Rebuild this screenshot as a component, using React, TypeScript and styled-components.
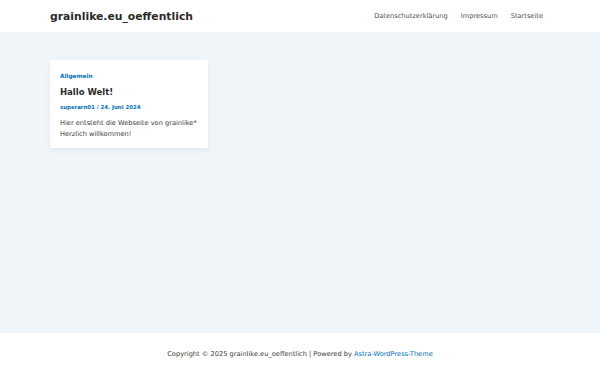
import React from "react";
import styled, { createGlobalStyle } from "styled-components";

const Global = createGlobalStyle`
  html, body { margin: 0; padding: 0; }
  body {
    font-family: "DejaVu Sans", Verdana, sans-serif;
    background: #f0f5fa;
    color: #3a3a3a;
  }
`;

const Page = styled.div`
  width: 600px;
  height: 375px;
  display: flex;
  flex-direction: column;
  background: #f0f5fa;
`;

const Header = styled.header`
  height: 33px;
  background: #ffffff;
  border-bottom: 1px solid #eef2f7;
  box-sizing: border-box;
  display: flex;
  align-items: center;
  justify-content: space-between;
  padding: 0 57px 0 50px;
`;

const SiteTitle = styled.a`
  font-size: 10.8px;
  font-weight: 700;
  color: #2a2a2a;
  text-decoration: none;
`;

const Nav = styled.nav`
  display: flex;
  gap: 13px;
`;

const NavLink = styled.a`
  font-size: 6.65px;
  color: #4b4f58;
  text-decoration: none;
`;

const Main = styled.main`
  flex: 1;
  padding: 27px 50px 0;
`;

const Card = styled.article`
  width: 158px;
  box-sizing: border-box;
  background: #ffffff;
  padding: 12px 10px 8px;
  box-shadow: 0 2px 6px rgba(0, 0, 0, 0.06);
`;

const Category = styled.a`
  display: block;
  font-size: 5.8px;
  font-weight: 700;
  color: #0170b9;
  text-decoration: none;
  line-height: 9px;
`;

const Title = styled.h2`
  margin: 5px 0 0;
  font-size: 8.5px;
  font-weight: 700;
  color: #2a2a2a;
  line-height: 13px;
`;

const Meta = styled.div`
  margin-top: 4px;
  font-size: 5.4px;
  font-weight: 700;
  color: #0170b9;
  line-height: 9px;
`;

const Excerpt = styled.p`
  margin: 6px 0 0;
  font-size: 6.65px;
  line-height: 11px;
  color: #3a3a3a;
`;

const Footer = styled.footer`
  height: 42px;
  background: #ffffff;
  display: flex;
  align-items: center;
  justify-content: center;
  font-size: 6.65px;
  color: #3a3a3a;
`;

const FooterLink = styled.a`
  color: #0170b9;
  text-decoration: none;
`;

export default function App() {
  return (
    <Page>
      <Global />
      <Header>
        <SiteTitle>grainlike.eu_oeffentlich</SiteTitle>
        <Nav>
          <NavLink>Datenschutzerklärung</NavLink>
          <NavLink>Impressum</NavLink>
          <NavLink>Startseite</NavLink>
        </Nav>
      </Header>
      <Main>
        <Card>
          <Category>Allgemein</Category>
          <Title>Hallo Welt!</Title>
          <Meta>superarn01 / 24. Juni 2024</Meta>
          <Excerpt>
            Hier entsteht die Webseite von grainlike*
            <br />
            Herzlich willkommen!
          </Excerpt>
        </Card>
      </Main>
      <Footer>
        <span>
          Copyright © 2025 grainlike.eu_oeffentlich | Powered by{" "}
          <FooterLink>Astra-WordPress-Theme</FooterLink>
        </span>
      </Footer>
    </Page>
  );
}
